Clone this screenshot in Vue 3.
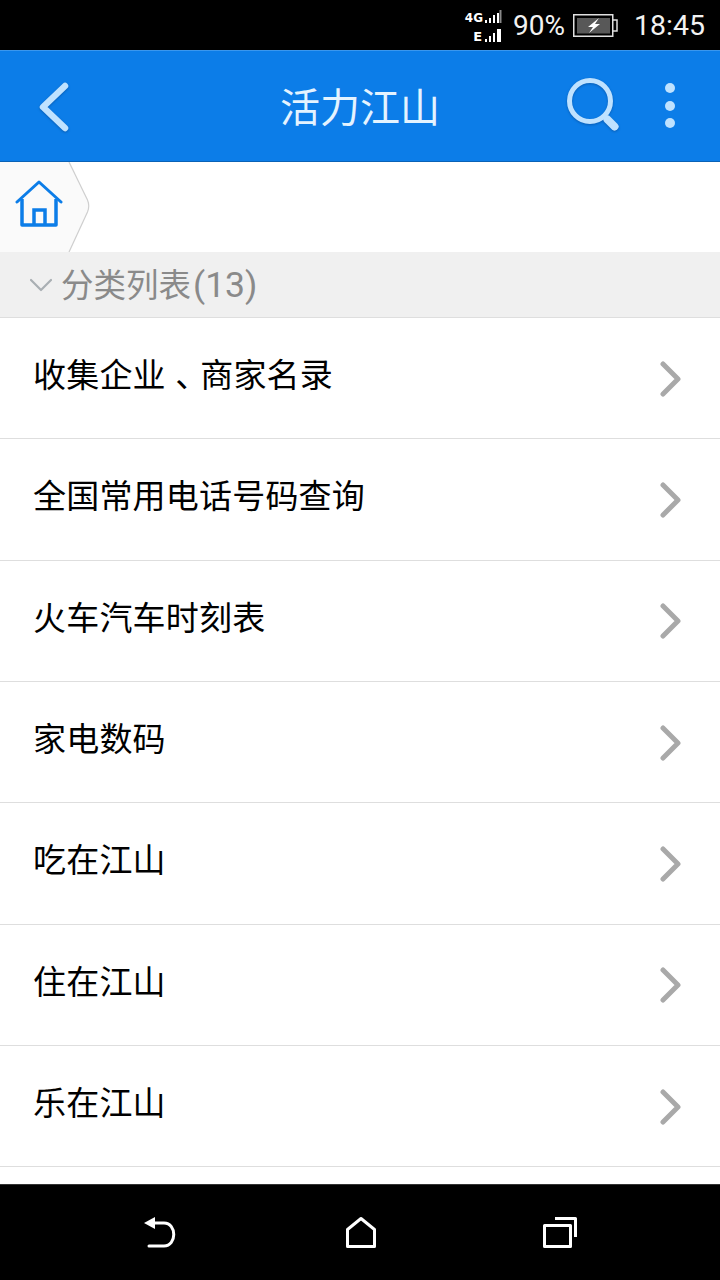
<script setup>
const categories = [
  '收集企业 、商家名录',
  '全国常用电话号码查询',
  '火车汽车时刻表',
  '家电数码',
  '吃在江山',
  '住在江山',
  '乐在江山'
]

// 、 staat in het origineel verder naar rechts in de cel, dus apart zetten
function splitMark(name) {
  return name.split('、')
}
</script>

<template>
  <div class="page">
    <div class="status-bar">
      <div class="signal">
        <div class="signal-row">
          <span class="net net-4g">4G</span>
          <svg width="18" height="13" viewBox="0 0 18 13">
            <path d="M1 10h2v3H1zM5 8h2v5H5zM9 5h2v8H9zM13 3h2v10h-2z" fill="#fff" />
            <path d="M15.500 0h2v13h-2z" fill="#888" />
          </svg>
        </div>
        <div class="signal-row">
          <span class="net">E</span>
          <svg width="20" height="14" viewBox="0 0 20 14">
            <path d="M3 11h2v3H3zM7 8h2v6H7zM11 5h2v9h-2zM15 1h4v13h-4z" fill="#fff" />
          </svg>
        </div>
      </div>
      <span class="battery-pct">90%</span>
      <svg class="battery" width="45" height="23" viewBox="0 0 45 23">
        <rect x="0.750" y="0.750" width="39" height="21.500" fill="none" stroke="#e0e0e0" stroke-width="1.500" />
        <rect x="4" y="4" width="33" height="15.500" fill="#585858" />
        <path d="M40 6h4v11h-4" fill="none" stroke="#e0e0e0" stroke-width="1.500" />
        <path d="M26 4l-11 9h5l-4 6 11-9h-5z" fill="#fff" />
      </svg>
      <span class="clock">18:45</span>
    </div>

    <header class="app-bar">
      <svg class="back" width="36" height="52" viewBox="0 0 36 52">
        <path d="M28 6 L6 27 L28 48" fill="none" stroke="#bfe2ff" stroke-width="6.500" stroke-linecap="round" stroke-linejoin="round" />
      </svg>
      <h1 class="title">活力江山</h1>
      <svg class="search" width="56" height="56" viewBox="0 0 56 56">
        <circle cx="25" cy="25" r="20.500" fill="none" stroke="#bfe2ff" stroke-width="5" />
        <path d="M42.500 43.500l7 7" stroke="#bfe2ff" stroke-width="8" stroke-linecap="round" />
      </svg>
      <div class="dots">
        <i></i>
        <i></i>
        <i></i>
      </div>
    </header>

    <div class="crumbs">
      <div class="crumb-home">
        <svg width="48" height="48" viewBox="0 0 48 48">
          <path d="M2 22 L24 2 L46 22" fill="none" stroke="#0c7de8" stroke-width="3" stroke-linecap="round" stroke-linejoin="round" />
          <path d="M7 19V45H41V19" fill="none" stroke="#0c7de8" stroke-width="3.500" stroke-linejoin="round" />
          <path d="M19 45V30H30V45" fill="none" stroke="#0c7de8" stroke-width="3.500" />
        </svg>
      </div>
      <svg class="crumb-tip" width="24" height="90" viewBox="0 0 24 90">
        <path d="M0 0H2L19.500 38Q22 44 19.500 50L2 90H0Z" fill="#fafafa" />
        <path d="M1 0L19.500 38Q22 44 19.500 50L1 90" fill="none" stroke="#cfcfcf" stroke-width="1.200" />
      </svg>
    </div>

    <div class="section-head">
      <svg width="22" height="14" viewBox="0 0 22 14">
        <path d="M1 2 L11 12 L21 2" fill="none" stroke="#a9afb3" stroke-width="2.200" stroke-linecap="round" stroke-linejoin="round" />
      </svg>
      <span class="section-label">分类列表<span class="count">(13)</span></span>
    </div>

    <ul class="list">
      <li v-for="name in categories" :key="name" class="row">
        <span class="row-name">
          <template v-for="(part, i) in splitMark(name)" :key="i">
            <span v-if="i > 0" class="mark">、</span>{{ part }}
          </template>
        </span>
        <svg width="22" height="36" viewBox="0 0 22 36">
          <path d="M3 3 L18 18 L3 33" fill="none" stroke="#a9a9a9" stroke-width="5" stroke-linecap="round" stroke-linejoin="round" />
        </svg>
      </li>
    </ul>

    <nav class="nav-bar">
      <svg width="34" height="31" viewBox="0 0 34 31">
        <path d="M5 6H20C33 6 33 29 20 29H5" fill="none" stroke="#fff" stroke-width="3" stroke-linecap="round" />
        <path d="M0 6 L11 0 V12 Z" fill="#fff" />
      </svg>
      <svg width="30" height="31" viewBox="0 0 30 31">
        <path d="M1.500 29.500V12.500L15 1.500L28.500 12.500V29.500Z" fill="none" stroke="#fff" stroke-width="3" stroke-linejoin="round" />
      </svg>
      <svg width="34" height="31" viewBox="0 0 34 31">
        <rect x="1.500" y="8.500" width="26" height="21" fill="none" stroke="#fff" stroke-width="3" stroke-linejoin="round" />
        <path d="M12 1.500H32.500V20" fill="none" stroke="#fff" stroke-width="3" stroke-linejoin="round" />
      </svg>
    </nav>
  </div>
</template>

<style scoped>
.page {
  width: 720px;
  height: 1280px;
  display: flex;
  flex-direction: column;
  overflow: hidden;
  background: #fff;
  font-family: Roboto, "Noto Sans CJK SC", sans-serif;
}

.status-bar {
  height: 50px;
  flex-shrink: 0;
  background: #000;
  color: #fff;
  display: flex;
  align-items: center;
  justify-content: flex-end;
  padding-right: 15px;
  box-sizing: border-box;
}

.signal {
  display: flex;
  flex-direction: column;
  align-items: flex-end;
  gap: 5px;
  margin-right: 11px;
  margin-top: 2px;
}

.signal-row {
  display: flex;
  align-items: flex-end;
}

.net {
  font-family: "DejaVu Sans", sans-serif;
  font-size: 13px;
  font-weight: 700;
  line-height: 10px;
}

.net-4g {
  font-size: 12px;
  line-height: 9px;
  margin-right: 1px;
}

.battery-pct {
  font-size: 28px;
  color: #f2f2f2;
}

.battery {
  margin-left: 8px;
  margin-right: 16px;
}

.clock {
  font-size: 28.500px;
  color: #f2f2f2;
}

.app-bar {
  height: 112px;
  flex-shrink: 0;
  box-sizing: border-box;
  background: #0c7de8;
  border-top: 1px solid #3a97ee;
  border-bottom: 1px solid #0a62b6;
  display: flex;
  align-items: center;
  position: relative;
  padding-left: 37px;
}

.back,
.search {
  filter: drop-shadow(0 1px 1px rgba(0, 60, 130, 0.5));
}

.title {
  margin: 0 0 3px;
  position: absolute;
  left: 0;
  right: 0;
  text-align: center;
  font-size: 40px;
  font-weight: 400;
  color: #e4f3ff;
  pointer-events: none;
}

.search {
  margin-left: auto;
  margin-top: -5px;
  margin-right: 44px;
}

.dots {
  display: flex;
  flex-direction: column;
  gap: 7.500px;
  margin-right: 45px;
  margin-top: -1px;
}

.dots i {
  display: block;
  width: 10px;
  height: 10px;
  border-radius: 50%;
  background: #bfe2ff;
}

.crumbs {
  height: 90px;
  flex-shrink: 0;
  display: flex;
}

.crumb-home {
  width: 68px;
  background: #fafafa;
  display: flex;
  justify-content: center;
  align-items: center;
  padding-left: 9px;
  padding-bottom: 6px;
  box-sizing: border-box;
}

.section-head {
  height: 66px;
  flex-shrink: 0;
  box-sizing: border-box;
  background: #f0f0f0;
  border-bottom: 1px solid #dedede;
  display: flex;
  align-items: center;
  padding-left: 30px;
  gap: 9px;
  color: #8a8a8a;
}

.section-label {
  font-size: 32.500px;
  margin-bottom: 4px;
}

.count {
  font-size: 35.500px;
  margin-left: 2px;
}

.list {
  flex: 1;
  min-height: 0;
  overflow: hidden;
  margin: 0;
  padding: 0;
  list-style: none;
}

.row {
  height: 121.330px;
  box-sizing: border-box;
  border-bottom: 1px solid #dedede;
  display: flex;
  align-items: center;
  justify-content: space-between;
  padding: 0 38px 0 33px;
}

.row-name {
  font-size: 33px;
  color: #000;
  margin-bottom: 10px;
  letter-spacing: 0.200px;
  word-spacing: -6px;
}

.mark {
  margin-left: 7px;
  letter-spacing: -8px;
}

.row svg {
  margin-top: 1px;
}

.nav-bar {
  height: 96px;
  flex-shrink: 0;
  box-sizing: border-box;
  background: #000;
  border-top: 1px solid #333;
  display: flex;
  justify-content: space-between;
  align-items: center;
  padding: 0 143px 0 144px;
}
</style>

<style>
html,
body {
  margin: 0;
  background: #fff;
}
</style>
